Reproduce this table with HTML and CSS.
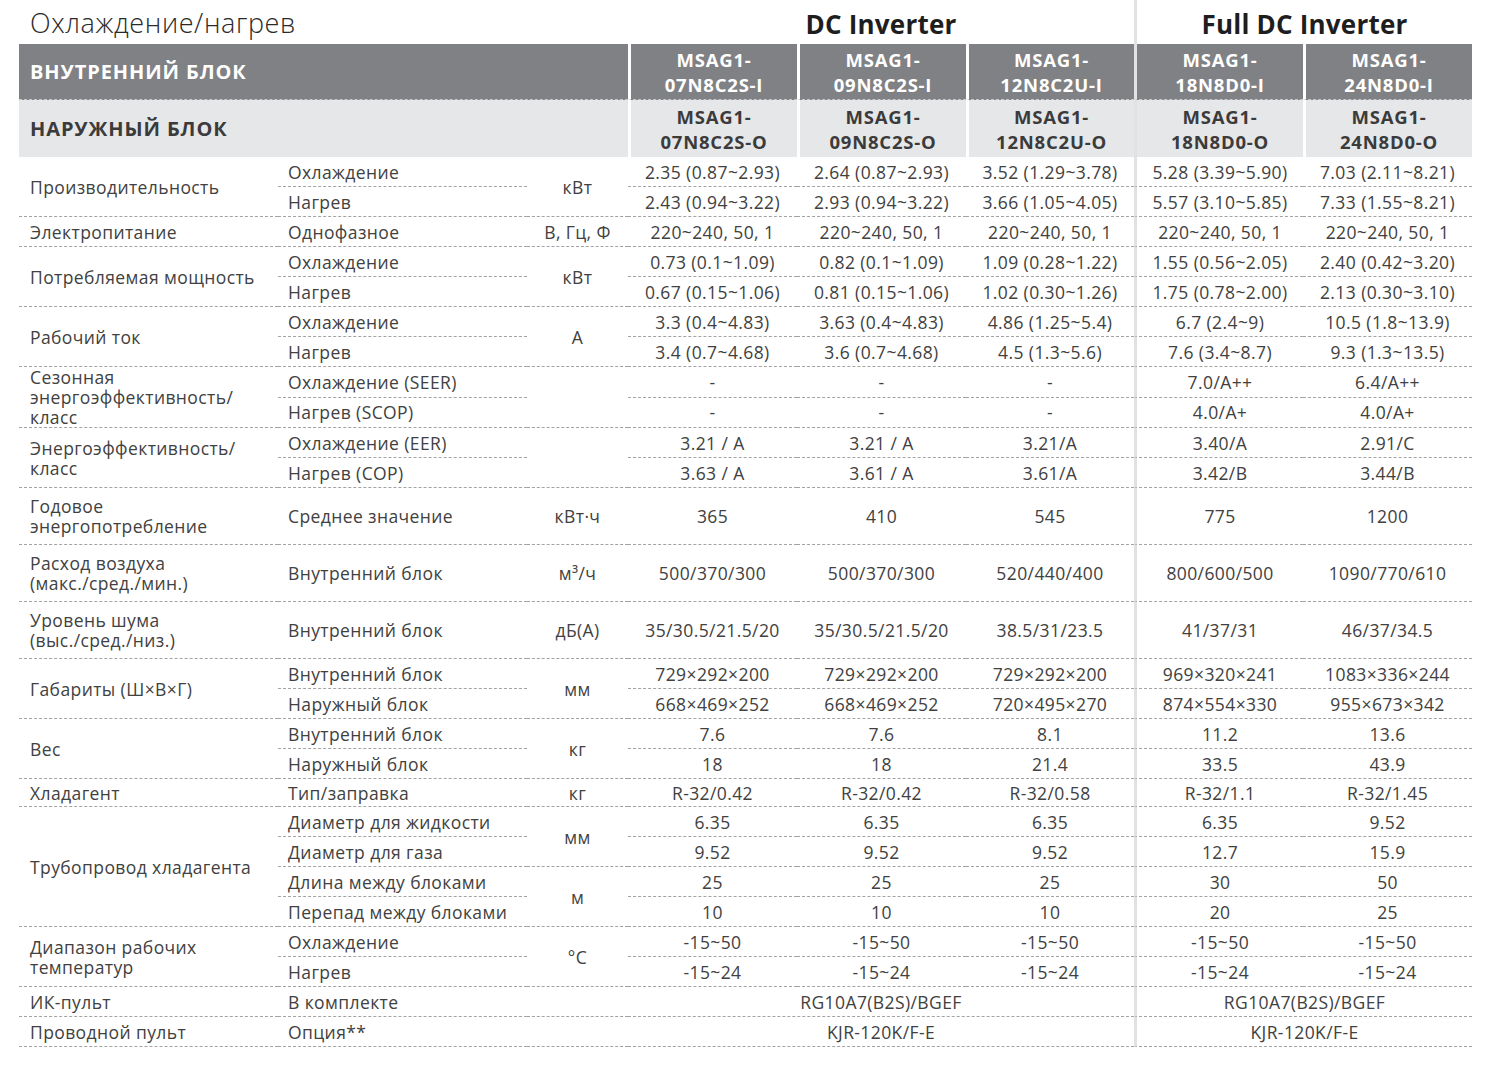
FILE: index.html
```html
<!DOCTYPE html>
<html lang="ru">
<head>
<meta charset="utf-8">
<title>Охлаждение/нагрев</title>
<link rel="stylesheet" href="styles.css">
</head>
<body>
<table class="spec">
  <colgroup>
    <col class="c-name"><col class="c-sub"><col class="c-unit">
    <col class="c-val"><col class="c-val"><col class="c-val3"><col class="c-val"><col class="c-val">
  </colgroup>
  <thead>
    <tr class="title-row">
      <td class="title" colspan="3">Охлаждение/нагрев</td>
      <td class="group" colspan="3">DC Inverter</td>
      <td class="group sep" colspan="2">Full DC Inverter</td>
    </tr>
    <tr class="hd1">
      <th class="hd-label" colspan="3">ВНУТРЕННИЙ БЛОК</th>
      <th class="model">MSAG1-<br>07N8C2S-I</th>
      <th class="model">MSAG1-<br>09N8C2S-I</th>
      <th class="model">MSAG1-<br>12N8C2U-I</th>
      <th class="model sep">MSAG1-<br>18N8D0-I</th>
      <th class="model">MSAG1-<br>24N8D0-I</th>
    </tr>
    <tr class="hd2">
      <th class="hd-label" colspan="3">НАРУЖНЫЙ БЛОК</th>
      <th class="model">MSAG1-<br>07N8C2S-O</th>
      <th class="model">MSAG1-<br>09N8C2S-O</th>
      <th class="model">MSAG1-<br>12N8C2U-O</th>
      <th class="model sep">MSAG1-<br>18N8D0-O</th>
      <th class="model">MSAG1-<br>24N8D0-O</th>
    </tr>
  </thead>
  <tbody>
    <tr class="h30">
      <td class="name" rowspan="2">Производительность</td>
      <td class="sub">Охлаждение</td>
      <td class="unit" rowspan="2">кВт</td>
      <td class="val">2.35 (0.87~2.93)</td><td class="val">2.64 (0.87~2.93)</td><td class="val">3.52 (1.29~3.78)</td><td class="val sep">5.28 (3.39~5.90)</td><td class="val">7.03 (2.11~8.21)</td>
    </tr>
    <tr class="h30">
      <td class="sub">Нагрев</td>
      <td class="val">2.43 (0.94~3.22)</td><td class="val">2.93 (0.94~3.22)</td><td class="val">3.66 (1.05~4.05)</td><td class="val sep">5.57 (3.10~5.85)</td><td class="val">7.33 (1.55~8.21)</td>
    </tr>
    <tr class="h30">
      <td class="name">Электропитание</td>
      <td class="sub">Однофазное</td>
      <td class="unit">В, Гц, Ф</td>
      <td class="val">220~240, 50, 1</td><td class="val">220~240, 50, 1</td><td class="val">220~240, 50, 1</td><td class="val sep">220~240, 50, 1</td><td class="val">220~240, 50, 1</td>
    </tr>
    <tr class="h30">
      <td class="name" rowspan="2">Потребляемая мощность</td>
      <td class="sub">Охлаждение</td>
      <td class="unit" rowspan="2">кВт</td>
      <td class="val">0.73 (0.1~1.09)</td><td class="val">0.82 (0.1~1.09)</td><td class="val">1.09 (0.28~1.22)</td><td class="val sep">1.55 (0.56~2.05)</td><td class="val">2.40 (0.42~3.20)</td>
    </tr>
    <tr class="h30">
      <td class="sub">Нагрев</td>
      <td class="val">0.67 (0.15~1.06)</td><td class="val">0.81 (0.15~1.06)</td><td class="val">1.02 (0.30~1.26)</td><td class="val sep">1.75 (0.78~2.00)</td><td class="val">2.13 (0.30~3.10)</td>
    </tr>
    <tr class="h30">
      <td class="name" rowspan="2">Рабочий ток</td>
      <td class="sub">Охлаждение</td>
      <td class="unit" rowspan="2">А</td>
      <td class="val">3.3 (0.4~4.83)</td><td class="val">3.63 (0.4~4.83)</td><td class="val">4.86 (1.25~5.4)</td><td class="val sep">6.7 (2.4~9)</td><td class="val">10.5 (1.8~13.9)</td>
    </tr>
    <tr class="h30">
      <td class="sub">Нагрев</td>
      <td class="val">3.4 (0.7~4.68)</td><td class="val">3.6 (0.7~4.68)</td><td class="val">4.5 (1.3~5.6)</td><td class="val sep">7.6 (3.4~8.7)</td><td class="val">9.3 (1.3~13.5)</td>
    </tr>
    <tr class="h30">
      <td class="name" rowspan="2">Сезонная<br>энергоэффективность/<br>класс</td>
      <td class="sub">Охлаждение (SEER)</td>
      <td class="unit" rowspan="2"></td>
      <td class="val">-</td><td class="val">-</td><td class="val">-</td><td class="val sep">7.0/A++</td><td class="val">6.4/A++</td>
    </tr>
    <tr class="h30">
      <td class="sub">Нагрев (SCOP)</td>
      <td class="val">-</td><td class="val">-</td><td class="val">-</td><td class="val sep">4.0/A+</td><td class="val">4.0/A+</td>
    </tr>
    <tr class="h30">
      <td class="name" rowspan="2">Энергоэффективность/<br>класс</td>
      <td class="sub">Охлаждение (EER)</td>
      <td class="unit" rowspan="2"></td>
      <td class="val">3.21 / A</td><td class="val">3.21 / A</td><td class="val">3.21/A</td><td class="val sep">3.40/A</td><td class="val">2.91/C</td>
    </tr>
    <tr class="h30">
      <td class="sub">Нагрев (COP)</td>
      <td class="val">3.63 / A</td><td class="val">3.61 / A</td><td class="val">3.61/A</td><td class="val sep">3.42/B</td><td class="val">3.44/B</td>
    </tr>
    <tr class="h57">
      <td class="name">Годовое<br>энергопотребление</td>
      <td class="sub">Среднее значение</td>
      <td class="unit">кВт·ч</td>
      <td class="val">365</td><td class="val">410</td><td class="val">545</td><td class="val sep">775</td><td class="val">1200</td>
    </tr>
    <tr class="h57">
      <td class="name">Расход воздуха<br>(макс./сред./мин.)</td>
      <td class="sub">Внутренний блок</td>
      <td class="unit">м³/ч</td>
      <td class="val">500/370/300</td><td class="val">500/370/300</td><td class="val">520/440/400</td><td class="val sep">800/600/500</td><td class="val">1090/770/610</td>
    </tr>
    <tr class="h57">
      <td class="name">Уровень шума<br>(выс./сред./низ.)</td>
      <td class="sub">Внутренний блок</td>
      <td class="unit">дБ(А)</td>
      <td class="val">35/30.5/21.5/20</td><td class="val">35/30.5/21.5/20</td><td class="val">38.5/31/23.5</td><td class="val sep">41/37/31</td><td class="val">46/37/34.5</td>
    </tr>
    <tr class="h30">
      <td class="name" rowspan="2">Габариты (Ш×В×Г)</td>
      <td class="sub">Внутренний блок</td>
      <td class="unit" rowspan="2">мм</td>
      <td class="val">729×292×200</td><td class="val">729×292×200</td><td class="val">729×292×200</td><td class="val sep">969×320×241</td><td class="val">1083×336×244</td>
    </tr>
    <tr class="h30">
      <td class="sub">Наружный блок</td>
      <td class="val">668×469×252</td><td class="val">668×469×252</td><td class="val">720×495×270</td><td class="val sep">874×554×330</td><td class="val">955×673×342</td>
    </tr>
    <tr class="h30">
      <td class="name" rowspan="2">Вес</td>
      <td class="sub">Внутренний блок</td>
      <td class="unit" rowspan="2">кг</td>
      <td class="val">7.6</td><td class="val">7.6</td><td class="val">8.1</td><td class="val sep">11.2</td><td class="val">13.6</td>
    </tr>
    <tr class="h30">
      <td class="sub">Наружный блок</td>
      <td class="val">18</td><td class="val">18</td><td class="val">21.4</td><td class="val sep">33.5</td><td class="val">43.9</td>
    </tr>
    <tr class="h28">
      <td class="name">Хладагент</td>
      <td class="sub">Тип/заправка</td>
      <td class="unit">кг</td>
      <td class="val">R-32/0.42</td><td class="val">R-32/0.42</td><td class="val">R-32/0.58</td><td class="val sep">R-32/1.1</td><td class="val">R-32/1.45</td>
    </tr>
    <tr class="h30">
      <td class="name" rowspan="4">Трубопровод хладагента</td>
      <td class="sub">Диаметр для жидкости</td>
      <td class="unit" rowspan="2">мм</td>
      <td class="val">6.35</td><td class="val">6.35</td><td class="val">6.35</td><td class="val sep">6.35</td><td class="val">9.52</td>
    </tr>
    <tr class="h30">
      <td class="sub">Диаметр для газа</td>
      <td class="val">9.52</td><td class="val">9.52</td><td class="val">9.52</td><td class="val sep">12.7</td><td class="val">15.9</td>
    </tr>
    <tr class="h30">
      <td class="sub">Длина между блоками</td>
      <td class="unit" rowspan="2">м</td>
      <td class="val">25</td><td class="val">25</td><td class="val">25</td><td class="val sep">30</td><td class="val">50</td>
    </tr>
    <tr class="h30">
      <td class="sub">Перепад между блоками</td>
      <td class="val">10</td><td class="val">10</td><td class="val">10</td><td class="val sep">20</td><td class="val">25</td>
    </tr>
    <tr class="h30">
      <td class="name" rowspan="2">Диапазон рабочих<br>температур</td>
      <td class="sub">Охлаждение</td>
      <td class="unit" rowspan="2">°C</td>
      <td class="val">-15~50</td><td class="val">-15~50</td><td class="val">-15~50</td><td class="val sep">-15~50</td><td class="val">-15~50</td>
    </tr>
    <tr class="h30">
      <td class="sub">Нагрев</td>
      <td class="val">-15~24</td><td class="val">-15~24</td><td class="val">-15~24</td><td class="val sep">-15~24</td><td class="val">-15~24</td>
    </tr>
    <tr class="h30">
      <td class="name">ИК-пульт</td>
      <td class="sub">В комплекте</td>
      <td class="unit"></td>
      <td class="val" colspan="3">RG10A7(B2S)/BGEF</td><td class="val sep" colspan="2">RG10A7(B2S)/BGEF</td>
    </tr>
    <tr class="h30">
      <td class="name">Проводной пульт</td>
      <td class="sub">Опция**</td>
      <td class="unit"></td>
      <td class="val" colspan="3">KJR-120K/F-E</td><td class="val sep" colspan="2">KJR-120K/F-E</td>
    </tr>
  </tbody>
</table>
</body>
</html>
```

FILE: styles.css
```css
* { box-sizing: border-box; }

body {
  margin: 0;
  padding: 0 19px;
  background: #ffffff;
  font-family: "Open Sans", "Noto Sans", sans-serif;
  color: #414141;
}

.spec {
  border-collapse: separate;
  border-spacing: 0;
  table-layout: fixed;
  width: 1453px;
  font-size: 17.5px;
  letter-spacing: 0.4px;
}

.c-name { width: 259px; }
.c-sub { width: 249px; }
.c-unit { width: 101px; }
.c-val { width: 169px; }
.c-val3 { width: 168px; }

.spec td, .spec th {
  padding: 0;
}

.title-row { height: 44px; }

.spec .title {
  padding-left: 11px;
  font-size: 27px;
  font-weight: 300;
  letter-spacing: 0.6px;
  color: #2a2a2a;
  text-align: left;
  vertical-align: middle;
}

.spec .group {
  font-size: 26px;
  font-weight: 700;
  letter-spacing: 0.2px;
  color: #1e1e1e;
  text-align: center;
  vertical-align: middle;
  padding-top: 3px;
}

.sep { border-left: 3px solid #e2e2e2; }

.hd1 th, .hd2 th {
  font-weight: 700;
  font-size: 18.5px;
  letter-spacing: 0.8px;
  line-height: 25px;
  vertical-align: middle;
}

.hd1 th {
  height: 56px;
  background: #808184;
  color: #ffffff;
  border-bottom: 1px dashed #c7c7c9;
}

.hd2 th {
  height: 57px;
  background: #e6e7e8;
  color: #3b3b3c;
}

.spec .hd-label {
  text-align: left;
  padding-left: 11px;
  font-size: 20px;
  letter-spacing: 0.9px;
}

.model {
  text-align: center;
  border-left: 3px solid #ffffff;
}

.model.sep { border-left-color: #e2e2e2; }

.h30 { height: 30px; }
.h57 { height: 57px; }
.h28 { height: 28px; }

.spec tbody td {
  vertical-align: middle;
  border-bottom: 1px dashed #a3a3a3;
  line-height: 20px;
  white-space: nowrap;
}

.spec .name { padding-left: 11px; text-align: left; }
.spec .sub { padding-left: 10px; text-align: left; }
.spec .unit { text-align: center; }
.spec .val { text-align: center; }
```
